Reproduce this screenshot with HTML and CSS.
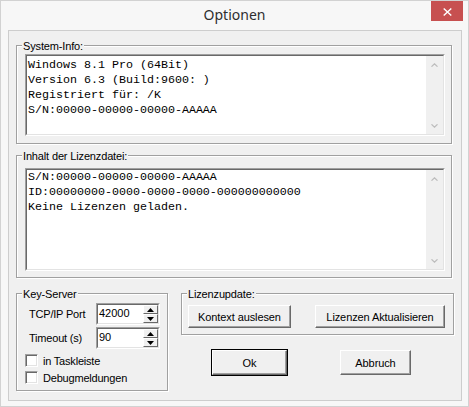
FILE: index.html
```html
<!DOCTYPE html>
<html lang="de">
<head>
<meta charset="utf-8">
<title>Optionen</title>
<link rel="stylesheet" href="styles.css">
</head>
<body>
<div class="window">
  <div class="titlebar">
    <div class="title">Optionen</div>
    <button class="close" aria-label="Schließen">
      <svg width="9" height="8" viewBox="0 0 9 8"><path d="M0.7 0.5L8.3 7.5M8.3 0.5L0.7 7.5" stroke="#fff" stroke-width="1.4" fill="none"/></svg>
    </button>
  </div>
  <div class="client">
    <div class="group g-sys">
      <div class="group-label">System-Info:</div>
      <div class="edit">
        <div class="edit-in">
          <div class="edit-text t-sys">Windows 8.1 Pro (64Bit)
Version 6.3 (Build:9600: )
Registriert für: /K
S/N:00000-00000-00000-AAAAA</div>
          <div class="vscroll">
            <div class="sb-arrow"><svg width="7" height="4" viewBox="0 0 7 4"><path d="M0.5 3.7L3.5 0.8L6.5 3.7" stroke="#bdbdbd" stroke-width="1.2" fill="none"/></svg></div>
            <div class="sb-arrow"><svg width="7" height="4" viewBox="0 0 7 4"><path d="M0.5 0.3L3.5 3.2L6.5 0.3" stroke="#bdbdbd" stroke-width="1.2" fill="none"/></svg></div>
          </div>
        </div>
      </div>
    </div>

    <div class="group g-lic">
      <div class="group-label">Inhalt der Lizenzdatei:</div>
      <div class="edit">
        <div class="edit-in">
          <div class="edit-text t-lic">S/N:00000-00000-00000-AAAAA
ID:00000000-0000-0000-0000-000000000000
Keine Lizenzen geladen.</div>
          <div class="vscroll">
            <div class="sb-arrow"><svg width="7" height="4" viewBox="0 0 7 4"><path d="M0.5 3.7L3.5 0.8L6.5 3.7" stroke="#bdbdbd" stroke-width="1.2" fill="none"/></svg></div>
            <div class="sb-arrow"><svg width="7" height="4" viewBox="0 0 7 4"><path d="M0.5 0.3L3.5 3.2L6.5 0.3" stroke="#bdbdbd" stroke-width="1.2" fill="none"/></svg></div>
          </div>
        </div>
      </div>
    </div>

    <div class="bottom">
      <div class="group g-key">
        <div class="group-label">Key-Server</div>
        <div class="form-grid">
          <div class="field-label">TCP/IP Port</div>
          <div class="edit spin-input">
            <div class="edit-in">
              <div class="spin-text">42000</div>
              <div class="spin">
                <div class="spin-btn"><svg width="7" height="4" viewBox="0 0 7 4"><path d="M0 4L3.5 0L7 4Z" fill="#000"/></svg></div>
                <div class="spin-btn"><svg width="7" height="4" viewBox="0 0 7 4"><path d="M0 0L3.5 4L7 0Z" fill="#000"/></svg></div>
              </div>
            </div>
          </div>
          <div class="field-label">Timeout (s)</div>
          <div class="edit spin-input">
            <div class="edit-in">
              <div class="spin-text">90</div>
              <div class="spin">
                <div class="spin-btn"><svg width="7" height="4" viewBox="0 0 7 4"><path d="M0 4L3.5 0L7 4Z" fill="#000"/></svg></div>
                <div class="spin-btn"><svg width="7" height="4" viewBox="0 0 7 4"><path d="M0 0L3.5 4L7 0Z" fill="#000"/></svg></div>
              </div>
            </div>
          </div>
        </div>
        <div class="check-row first"><div class="check"></div><span>in Taskleiste</span></div>
        <div class="check-row"><div class="check"></div><span>Debugmeldungen</span></div>
      </div>

      <div class="right-col">
        <div class="group g-upd">
          <div class="group-label">Lizenzupdate:</div>
          <button class="btn btn-ctx">Kontext auslesen</button>
          <button class="btn btn-upd">Lizenzen Aktualisieren</button>
        </div>
        <div class="actions">
          <button class="btn btn-ok">Ok</button>
          <button class="btn btn-cancel">Abbruch</button>
        </div>
      </div>
    </div>
  </div>
</div>
</body>
</html>
```

FILE: styles.css
```css
body {
  margin: 0;
  background: #ffffff;
}

.window {
  width: 469px;
  height: 407px;
  box-sizing: border-box;
  border: 1px solid #d2d2d2;
  background: #f7f7f7;
  display: flex;
  flex-direction: column;
  font-family: "Liberation Sans", Arial, sans-serif;
  font-size: 11px;
  color: #000;
}

.titlebar {
  height: 29px;
  display: grid;
  grid-template-columns: 1fr auto 1fr;
}

.title {
  grid-column: 2;
  grid-row: 1;
  align-self: center;
  font-family: "Noto Sans", sans-serif;
  font-size: 14px;
  line-height: 20px;
  color: #2e2e2e;
  padding-bottom: 1px;
}

.close {
  grid-column: 3;
  grid-row: 1;
  justify-self: end;
  align-self: start;
  width: 32px;
  height: 20px;
  margin-right: 5px;
  padding: 2px 0 0 0;
  border: 0;
  background: #c75050;
  display: flex;
  align-items: center;
  justify-content: center;
}

.client {
  flex: 1;
  margin: 0 6px 5px 7px;
  border: 1px solid #cdcdcd;
  background: #f0f0f0;
  padding: 14px 7px 0 7px;
  display: flex;
  flex-direction: column;
  align-items: flex-start;
}

.group {
  position: relative;
  box-sizing: border-box;
  border: 1px solid #a0a0a0;
  box-shadow: inset 1px 1px 0 #fff, 1px 1px 0 #fff;
}

.group-label {
  position: absolute;
  top: -6px;
  left: 5px;
  padding: 0 1px;
  background: #f0f0f0;
  line-height: 13px;
  white-space: nowrap;
  letter-spacing: -0.15px;
}

.g-sys {
  width: 436px;
  height: 99px;
  padding: 8px 6px 7px 8px;
  display: flex;
}

.g-lic {
  width: 436px;
  height: 123px;
  margin-top: 11px;
  padding: 12px 6px 6px 8px;
  display: flex;
}

.edit {
  flex: 1;
  display: flex;
  border: 1px solid;
  border-color: #a0a0a0 #ffffff #ffffff #a0a0a0;
}

.edit-in {
  flex: 1;
  min-width: 0;
  display: flex;
  border: 1px solid;
  border-color: #696969 #e3e3e3 #e3e3e3 #696969;
  background: #fff;
}

.edit-text {
  flex: 1;
  font-family: "Liberation Mono", "Courier New", monospace;
  font-size: 11.67px;
  line-height: 15px;
  white-space: pre;
  padding: 2px 0 0 1px;
  overflow: hidden;
}

.t-lic {
  padding-top: 0;
}

.vscroll {
  width: 17px;
  background: #f0f0f0;
  display: flex;
  flex-direction: column;
  justify-content: space-between;
}

.sb-arrow {
  height: 17px;
  display: flex;
  align-items: center;
  justify-content: center;
}

.bottom {
  display: flex;
  align-items: flex-start;
  margin-top: 15px;
}

.g-key {
  width: 152px;
  height: 98px;
  flex-shrink: 0;
  padding: 9px 0 0 8px;
}

.form-grid {
  display: grid;
  grid-template-columns: 67px 64px;
  grid-auto-rows: 22px;
  row-gap: 2px;
  align-items: center;
  margin-left: 4px;
}

.field-label {
  white-space: nowrap;
  letter-spacing: -0.2px;
}

.spin-input {
  height: 22px;
  box-sizing: border-box;
}

.spin-text {
  flex: 1;
  padding: 0 0 2px 1px;
  display: flex;
  align-items: center;
}

.spin {
  width: 15px;
  display: flex;
  flex-direction: column;
}

.spin-btn {
  flex: 1;
  box-sizing: border-box;
  border: 1px solid;
  border-color: #ffffff #696969 #696969 #ffffff;
  background: #f0f0f0;
  display: flex;
  align-items: center;
  justify-content: center;
}

.check-row {
  display: flex;
  align-items: center;
  gap: 5px;
  height: 13px;
  margin-top: 4px;
  white-space: nowrap;
  letter-spacing: -0.2px;
}

.check-row.first {
  margin-top: 5px;
}

.check {
  width: 13px;
  height: 13px;
  box-sizing: border-box;
  border: 1px solid;
  border-color: #a0a0a0 #ffffff #ffffff #a0a0a0;
  box-shadow: inset 1px 1px 0 #696969, inset -1px -1px 0 #e3e3e3;
  background: #fff;
  flex-shrink: 0;
}

.right-col {
  margin-left: 13px;
  display: flex;
  flex-direction: column;
}

.g-upd {
  width: 273px;
  height: 42px;
  padding: 11px 0 0 6px;
  display: flex;
  align-items: flex-start;
  gap: 24px;
}

.btn {
  box-sizing: border-box;
  height: 23px;
  padding: 0;
  font-family: "Liberation Sans", Arial, sans-serif;
  font-size: 11px;
  letter-spacing: -0.1px;
  color: #000;
  background: #f0f0f0;
  border: 1px solid;
  border-color: #ffffff #696969 #696969 #ffffff;
  box-shadow: inset -1px -1px 0 #a0a0a0;
  white-space: nowrap;
}

.btn-ctx {
  width: 103px;
}

.btn-upd {
  width: 130px;
}

.actions {
  display: flex;
  margin-top: 15px;
}

.btn-ok {
  width: 75px;
  height: 25px;
  margin-left: 31px;
  box-shadow: inset -1px -1px 0 #a0a0a0, 0 0 0 1px #000;
}

.btn-cancel {
  width: 71px;
  height: 25px;
  margin-left: 53px;
}
```
